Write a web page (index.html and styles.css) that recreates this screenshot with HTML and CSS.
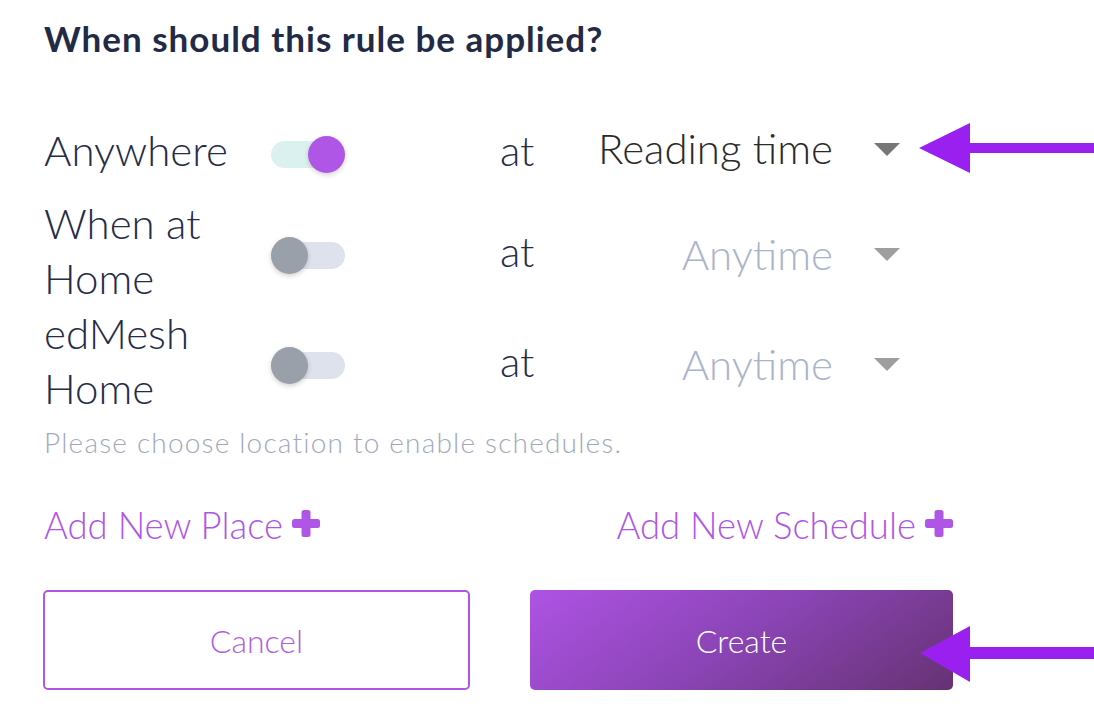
FILE: index.html
```html
<!DOCTYPE html>
<html lang="en">
<head>
    <meta charset="UTF-8">
    <title>Rule schedule</title>
    <link rel="stylesheet" href="styles.css">
</head>
<body>
<div class="rule_panel">
    <h2 class="rule_title">When should this rule be applied?</h2>

    <div class="rule_list">
        <div class="rule_row">
            <div class="rule_label">Anywhere</div>
            <div class="rule_toggle is_on"><span class="toggle_thumb"></span></div>
            <div class="rule_at">at</div>
            <div class="rule_select">
                <span class="select_value">Reading time</span>
                <span class="select_caret"></span>
            </div>
        </div>
        <div class="rule_row">
            <div class="rule_label">When at<br>Home</div>
            <div class="rule_toggle"><span class="toggle_thumb"></span></div>
            <div class="rule_at">at</div>
            <div class="rule_select is_disabled">
                <span class="select_value">Anytime</span>
                <span class="select_caret"></span>
            </div>
        </div>
        <div class="rule_row">
            <div class="rule_label">edMesh<br>Home</div>
            <div class="rule_toggle"><span class="toggle_thumb"></span></div>
            <div class="rule_at">at</div>
            <div class="rule_select is_disabled">
                <span class="select_value">Anytime</span>
                <span class="select_caret"></span>
            </div>
        </div>
    </div>

    <p class="rule_hint">Please choose location to enable schedules.</p>

    <div class="rule_links">
        <a class="add_link">Add New Place
            <svg class="plus_icon" viewBox="0 0 28 27"><rect x="9.5" y="0" width="9" height="27" rx="2.5"/><rect x="0" y="9" width="28" height="9" rx="2.5"/></svg>
        </a>
        <a class="add_link">Add New Schedule
            <svg class="plus_icon" viewBox="0 0 28 27"><rect x="9.5" y="0" width="9" height="27" rx="2.5"/><rect x="0" y="9" width="28" height="9" rx="2.5"/></svg>
        </a>
    </div>

    <div class="rule_buttons">
        <button class="btn btn_cancel">Cancel</button>
        <button class="btn btn_create">Create</button>
    </div>
</div>

<!-- annotation arrows -->
<svg class="note_arrow arrow_select" viewBox="0 0 175 50"><polygon points="0,25 51,0 51,20 175,20 175,30 51,30 51,50"/></svg>
<svg class="note_arrow arrow_create" viewBox="0 0 174 56"><polygon points="0,27 50,0 50,21 174,21 174,33 50,33 50,56"/></svg>
</body>
</html>
```

FILE: styles.css
```css
* {
    padding: 0;
    margin: 0;
    box-sizing: border-box;
}

body {
    font-family: Lato, "Noto Sans", sans-serif;
    background: #fff;
    color: #242c47;
}

.rule_panel {
    width: 910px;
    margin-left: 43px;
    padding-top: 17px;
}

.rule_title {
    font-size: 35px;
    font-weight: 700;
    letter-spacing: 1px;
    color: #222a45;
    line-height: 42px;
    padding-left: 1px;
    margin-bottom: 68px;
}

.rule_list .rule_row {
    display: grid;
    grid-template-columns: 228px 229px 60px 340px;
    align-items: center;
}
.rule_list .rule_row:first-child {
    margin-bottom: 18px;
}

/* Lato sits a bit low, pull the text up */
.rule_label,
.rule_at {
    font-size: 42px;
    font-weight: 300;
    line-height: 55px;
    margin-top: -4px;
    padding-bottom: 4px;
}
.rule_label {
    padding-left: 1px;
}

.rule_toggle {
    position: relative;
    width: 74px;
    height: 27px;
    border-radius: 14px;
    background: #dde2ec;
}
.rule_toggle .toggle_thumb {
    position: absolute;
    left: 0;
    top: -5px;
    width: 37px;
    height: 37px;
    border-radius: 50%;
    background: #99a0a9;
    box-shadow: 0 2px 5px rgba(0, 0, 0, .18);
}
.rule_toggle.is_on {
    background: #dbf1f0;
}
.rule_toggle.is_on .toggle_thumb {
    left: 37px;
    background: #b056e6;
}

.rule_select {
    display: flex;
    align-items: center;
    justify-content: flex-end;
    gap: 41px;
}
.rule_select .select_value {
    font-size: 42px;
    font-weight: 300;
    line-height: 55px;
    color: #2a2a2a;
    margin-top: -13px;
}
.rule_select .select_caret {
    width: 0;
    height: 0;
    border-left: 13.5px solid transparent;
    border-right: 13.5px solid transparent;
    border-top: 13px solid #777;
    margin-top: -10px;
}
.rule_select.is_disabled .select_value {
    color: #aab4cb;
    margin-top: -2px;
}
.rule_select.is_disabled .select_caret {
    border-top-color: #9e9e9e;
    margin-top: -2px;
}

.rule_hint {
    font-size: 28px;
    font-weight: 300;
    letter-spacing: 1.2px;
    color: #a2a9bd;
    line-height: 34px;
    margin-top: 5px;
    padding-left: 1px;
}

.rule_links {
    display: flex;
    justify-content: space-between;
    margin-top: 44px;
}
.rule_links .add_link {
    display: flex;
    align-items: center;
    gap: 9px;
    font-size: 36.5px;
    font-weight: 300;
    line-height: 45px;
    color: #b056e6;
    padding-left: 1px;
}
.rule_links .plus_icon {
    width: 28px;
    height: 27px;
    fill: #b056e6;
    margin-top: -4px;
}

.rule_buttons {
    display: flex;
    gap: 60px;
    margin-top: 42px;
}
.rule_buttons .btn {
    flex: 1;
    height: 100px;
    border-radius: 5px;
    font-family: Lato, "Noto Sans", sans-serif;
    font-size: 32px;
    font-weight: 300;
    cursor: pointer;
}
.rule_buttons .btn_cancel {
    background: #fff;
    border: 2px solid #b056e6;
    color: #b15be6;
}
.rule_buttons .btn_create {
    border: none;
    color: #fff;
    background: linear-gradient(145deg, #ae53e4 0%, #8a44b4 50%, #663272 100%);
}

.note_arrow {
    position: absolute;
    fill: #9a20ef;
}
.arrow_select {
    left: 919px;
    top: 123px;
    width: 175px;
    height: 50px;
}
.arrow_create {
    left: 920px;
    top: 626px;
    width: 174px;
    height: 56px;
}
```
